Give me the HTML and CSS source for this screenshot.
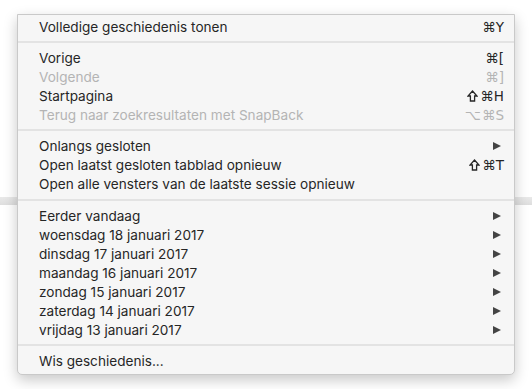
FILE: index.html
```html
<!DOCTYPE html>
<html lang="nl">
<head>
  <meta charset="UTF-8">
  <meta name="viewport" content="width=device-width, initial-scale=1.0">
  <title>Geschiedenis</title>
  <link rel="stylesheet" href="styles.css">
</head>
<body>

<div class="backdrop">
  <div class="toolbar-edge"></div>
</div>

<div class="menu">
  <div class="item"><span>Volledige geschiedenis tonen</span><span class="key">⌘Y</span></div>
  <div class="sep"></div>
  <div class="item"><span>Vorige</span><span class="key">⌘[</span></div>
  <div class="item disabled"><span>Volgende</span><span class="key">⌘]</span></div>
  <div class="item">
    <span>Startpagina</span>
    <span class="key"><svg class="shift" viewBox="0 0 11 12"><path d="M5.5 1 L10 6 H7.6 V11 H3.4 V6 H1 Z"/></svg>⌘H</span>
  </div>
  <div class="item disabled"><span>Terug naar zoekresultaten met SnapBack</span><span class="key"><span class="mod">⌥</span>⌘S</span></div>
  <div class="sep"></div>
  <div class="item"><span>Onlangs gesloten</span><span class="arrow"></span></div>
  <div class="item">
    <span>Open laatst gesloten tabblad opnieuw</span>
    <span class="key"><svg class="shift" viewBox="0 0 11 12"><path d="M5.5 1 L10 6 H7.6 V11 H3.4 V6 H1 Z"/></svg>⌘T</span>
  </div>
  <div class="item"><span>Open alle vensters van de laatste sessie opnieuw</span></div>
  <div class="sep wide"></div>
  <div class="item"><span>Eerder vandaag</span><span class="arrow"></span></div>
  <div class="item"><span>woensdag 18 januari 2017</span><span class="arrow"></span></div>
  <div class="item"><span>dinsdag 17 januari 2017</span><span class="arrow"></span></div>
  <div class="item"><span>maandag 16 januari 2017</span><span class="arrow"></span></div>
  <div class="item"><span>zondag 15 januari 2017</span><span class="arrow"></span></div>
  <div class="item"><span>zaterdag 14 januari 2017</span><span class="arrow"></span></div>
  <div class="item"><span>vrijdag 13 januari 2017</span><span class="arrow"></span></div>
  <div class="sep"></div>
  <div class="item"><span>Wis geschiedenis...</span></div>
</div>

</body>
</html>
```

FILE: styles.css
```css
body {
  margin: 0;
  padding: 0;
  width: 532px;
  height: 389px;
  overflow: hidden;
  background: #ffffff;
  font-family: Inter, "Liberation Sans", sans-serif;
  font-size: 13.6px;
  color: #262626;
}

.backdrop {
  padding-top: 197px;
}

.toolbar-edge {
  height: 8px;
  background: linear-gradient(#e9e9e9, #dedede);
}

/* the popup menu floats over the window */
.menu {
  position: absolute;
  left: 17px;
  top: 14px;
  width: 496px;
  padding: 2px 0 4px;
  background: #f6f6f6;
  border: 1px solid #c9c9c9;
  border-radius: 0 0 5px 5px;
  box-shadow: 0 5px 14px rgba(0, 0, 0, 0.22);
}

.item {
  display: flex;
  align-items: center;
  justify-content: space-between;
  height: 19px;
  padding: 0 10px 0 21px;
  white-space: nowrap;
}

.item.disabled {
  color: #b4b4b4;
}

.key {
  display: flex;
  align-items: center;
  font-family: "DejaVu Sans", sans-serif;
  font-size: 13.5px;
}

.key .mod {
  font-size: 14px;
  margin-right: 1px;
}

.shift {
  width: 11px;
  height: 12px;
  margin-right: 2px;
  fill: none;
  stroke: currentColor;
  stroke-width: 1.3;
  stroke-linejoin: miter;
}

.arrow {
  width: 0;
  height: 0;
  margin-right: 3px;
  border-top: 4.5px solid transparent;
  border-bottom: 4.5px solid transparent;
  border-left: 8px solid #444444;
}

.sep {
  height: 2px;
  margin: 5px 0;
  background: #e3e3e3;
}

.sep.wide {
  margin-top: 6px;
}
```
